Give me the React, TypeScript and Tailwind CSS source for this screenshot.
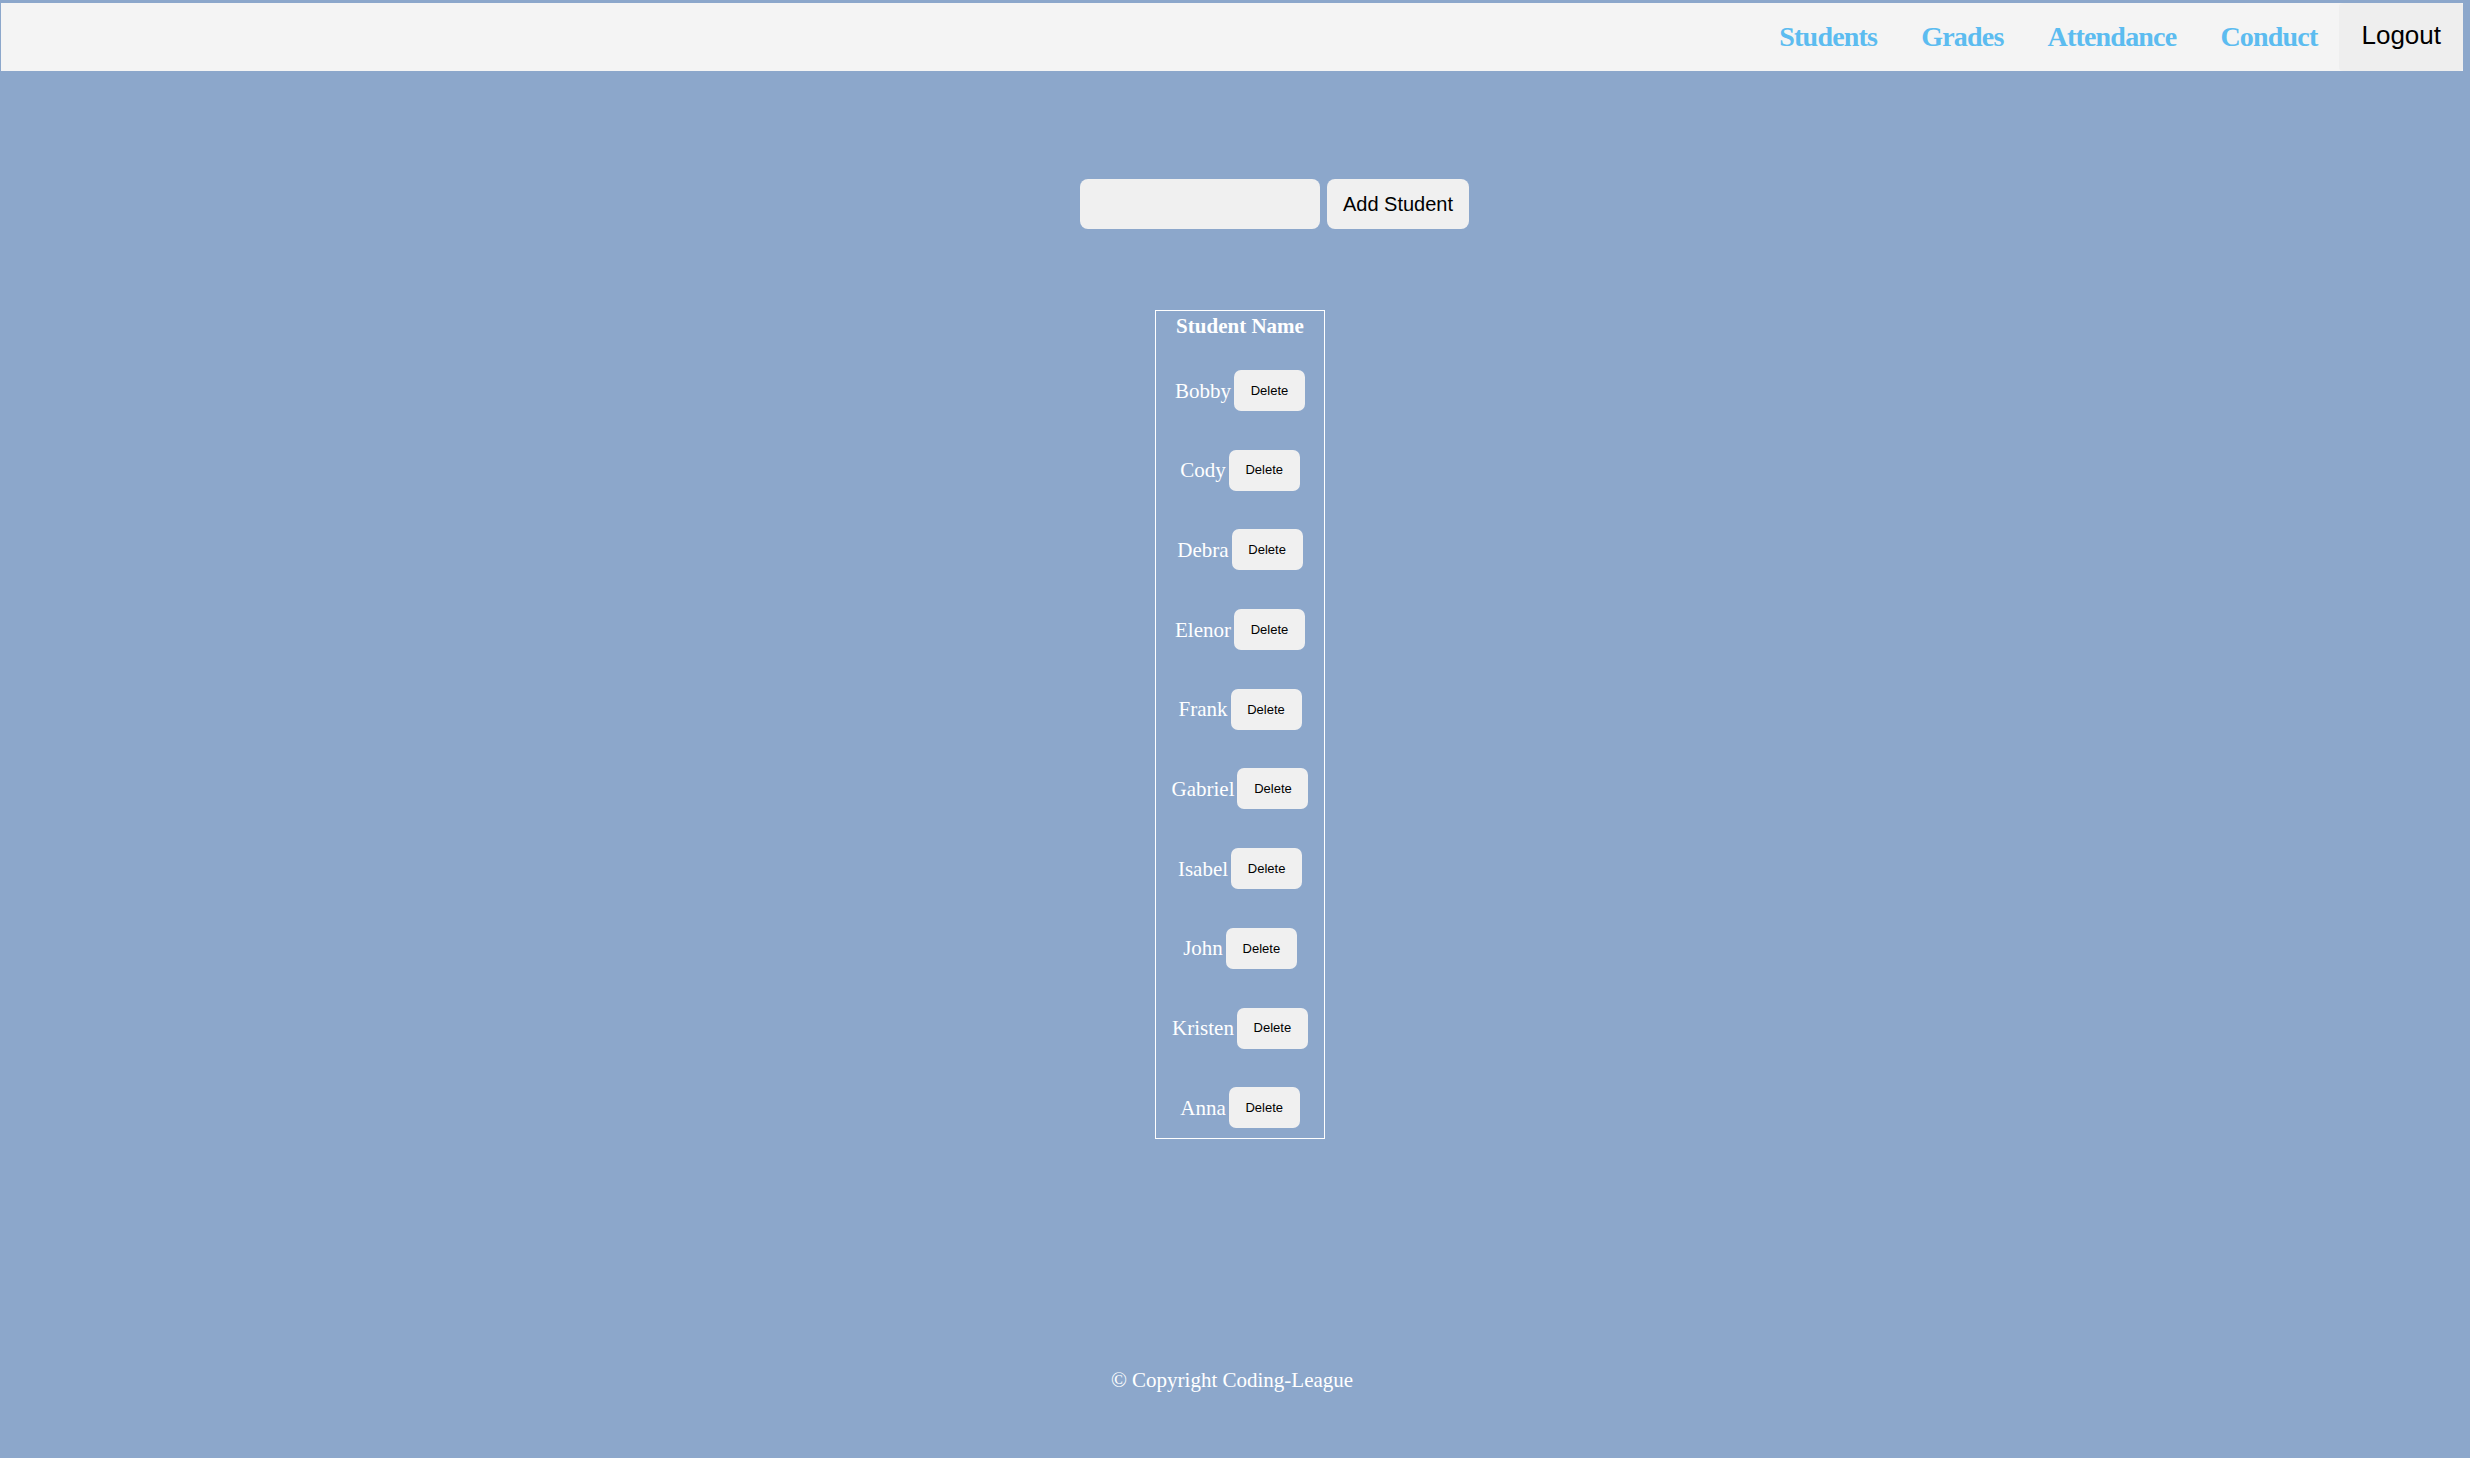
import React, { useState } from 'react';

const serif = "font-['Liberation_Serif','Times_New_Roman',serif]";
const sans = "font-['Liberation_Sans',Arial,sans-serif]";

const navLinks = ['Students', 'Grades', 'Attendance', 'Conduct'];

export default function App() {
  const [name, setName] = useState('');
  const [students, setStudents] = useState([
    'Bobby',
    'Cody',
    'Debra',
    'Elenor',
    'Frank',
    'Gabriel',
    'Isabel',
    'John',
    'Kristen',
    'Anna',
  ]);

  const addStudent = () => {
    if (!name.trim()) return;
    setStudents([...students, name.trim()]);
    setName('');
  };

  return (
    <div className="min-h-screen bg-[#8ca7cb] pt-[3px] pl-[1px] pr-[7px]">
      {/* Top nav */}
      <nav className="h-[68px] bg-[#f4f4f4] flex justify-end items-start">
        {navLinks.map((link) => (
          <a
            key={link}
            href="#"
            className={`${serif} px-[22px] h-[68px] leading-[68px] text-[28px] font-bold tracking-[-0.8px] text-[#5cbcf0]`}
          >
            {link}
          </a>
        ))}
        <button
          className={`${sans} px-[22px] h-[68px] leading-[64px] pb-[4px] text-[26px] text-black bg-[#eeeeee] rounded-[4px]`}
        >
          Logout
        </button>
      </nav>

      {/* Add form */}
      <div className="mt-[108px] flex justify-center pl-[85px] gap-[7px]">
        <input
          value={name}
          onChange={(e) => setName(e.target.value)}
          className={`${sans} w-[240px] h-[50px] rounded-[8px] bg-[#f0f0f0] px-3 text-[20px] outline-none`}
        />
        <button
          onClick={addStudent}
          className={`${sans} w-[142px] h-[50px] rounded-[8px] bg-[#f0f0f0] text-[20px] text-black`}
        >
          Add Student
        </button>
      </div>

      {/* Student list */}
      <div className="mt-[81px] flex justify-center pl-[16px]">
        <div className={`${serif} w-[170px] border border-white pt-[3px] pb-[3px] text-white`}>
          <div className="h-[24px] leading-[24px] text-center text-[21px] font-bold">Student Name</div>
          {students.map((s, i) => (
            <div key={s + i} className="pt-[32px] pb-[6.7px] flex justify-center items-center gap-[3px]">
              <span className="text-[21px] leading-[24px]">{s}</span>
              <button
                onClick={() => setStudents(students.filter((_, j) => j !== i))}
                className={`${sans} w-[71px] h-[41px] rounded-[7px] bg-[#f0f0f0] text-[13px] text-black`}
              >
                Delete
              </button>
            </div>
          ))}
        </div>
      </div>

      {/* Footer */}
      <footer className={`${serif} mt-[229px] text-center text-[21px] leading-[24px] text-white`}>
        © Copyright Coding-League
      </footer>
    </div>
  );
}
